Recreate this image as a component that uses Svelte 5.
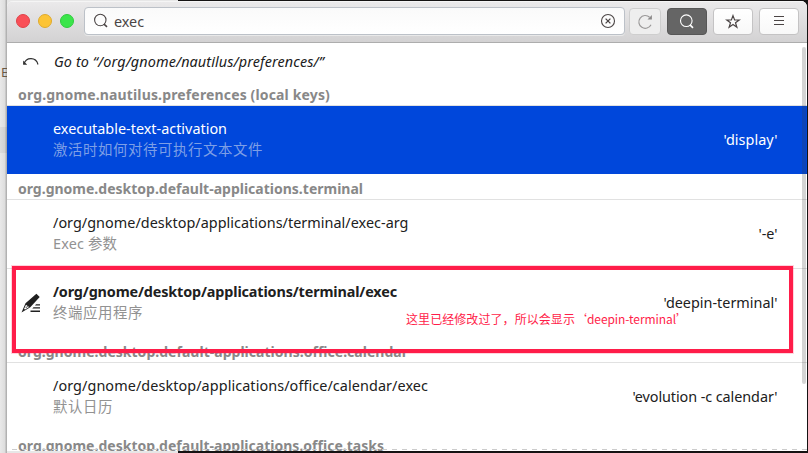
<script>
  const sections = [
    { title: 'org.gnome.nautilus.preferences (local keys)', width: 312, rows: [
      { name: 'executable-text-activation', nw: 174, desc: '激活时如何对待可执行文本文件', dw: 210, value: "'display'", vw: 54, selected: true }
    ] },
    { title: 'org.gnome.desktop.default-applications.terminal', width: 345, rows: [
      { name: '/org/gnome/desktop/applications/terminal/exec-arg', nw: 355.5, desc: 'Exec 参数', dw: 64, value: "'-e'", vw: 19 },
      { name: '/org/gnome/desktop/applications/terminal/exec', nw: 344, desc: '终端应用程序', dw: 90, value: "'deepin-terminal'", vw: 114, edited: true }
    ] },
    { title: 'org.gnome.desktop.default-applications.office.calendar', width: 390, rows: [
      { name: '/org/gnome/desktop/applications/office/calendar/exec', nw: 375, desc: '默认日历', dw: 60, value: "'evolution -c calendar'", vw: 145 }
    ] },
    { title: 'org.gnome.desktop.default-applications.office.tasks', width: 366, rows: [] }
  ];

  // Tracks a label so that it spans the given width.
  function fit(node, width) {
    const natural = node.getBoundingClientRect().width;
    const count = [...node.textContent].length;
    node.style.letterSpacing = `${(width - natural) / count}px`;
  }
</script>

<div class="desktop">
  <div class="behind"><span class="sliver">E</span><span class="band"></span></div>
  <div class="window">
    <header>
      <div class="lights"><i class="close"></i><i class="min"></i><i class="max"></i></div>
      <div class="search">
        <svg width="16" height="16" viewBox="0 0 16 16" fill="none" stroke="#4b4545" stroke-width="1.1"><circle cx="7.3" cy="7" r="5.7" /><path d="M11 11.2l3 2.7" stroke-width="1.6" /></svg>
        <span class="query" use:fit={30}>exec</span>
        <svg class="clear" width="16" height="16" viewBox="0 0 16 16" fill="none" stroke="#4b4545" stroke-width="1.1"><circle cx="8" cy="8" r="6.5" /><path d="M5.6 5.6l4.8 4.8M10.4 5.6l-4.8 4.8" stroke-width="1.3" /></svg>
      </div>
      <button class="reload" aria-label="Reload"><svg width="16" height="16" viewBox="0 0 16 16" fill="none" stroke="#9b9999" stroke-width="1.2"><path d="M12.6 3.2A6.4 6.4 0 1 0 14 10.7" /><path d="M14.9 1v4.4h-4.4z" fill="#8b8989" stroke="none" /></svg></button>
      <button class="active" aria-label="Search"><svg width="16" height="16" viewBox="0 0 16 16" fill="none" stroke="#fff" stroke-width="1.1"><circle cx="7.3" cy="6.7" r="5.8" /><path d="M11 10.9l3 2.9" stroke-width="1.6" /></svg></button>
      <button aria-label="Bookmarks"><svg width="16" height="16" viewBox="0 0 16 16" fill="none" stroke="#4b4545" stroke-width="1.2"><path d="M8 1.6l1.6 4.4h4.6l-3.7 2.7 1.4 4.5L8 10.5l-3.9 2.7 1.4-4.5L1.8 6h4.6z" /></svg></button>
      <button aria-label="Menu"><svg class="bars" width="16" height="16" viewBox="0 0 16 16" stroke="#4b4545"><path d="M3 3.5h10M3 7.5h10M3 11.5h10" /></svg></button>
    </header>
    <main>
      <div class="goto">
        <svg width="18" height="12" viewBox="0 0 18 12" fill="none" stroke="#303030" stroke-width="1.1"><path d="M2 7.8C4 1 14 .5 16 8.5" /><path d="M1.1 4.6v4.2h4.1z" fill="#303030" stroke="none" /></svg>
        <em use:fit={270}>Go to “/org/gnome/nautilus/preferences/”</em>
      </div>
      {#each sections as section}
        <h2><span use:fit={section.width}>{section.title}</span></h2>
        {#each section.rows as row}
          <div class="row" class:selected={row.selected} class:edited={row.edited}>
            <div class="mark">
              {#if row.edited}
                <svg width="20" height="20" viewBox="0 0 20 20" fill="#202020"><path d="M15.4.8l3.3 3.3L9.3 14.2.5 19.5l4-9.2zM15 11.3h4v1.2h-5zM12.5 14.2H19v1.3h-7.7zM9.5 17.6H19V19H9.5z" /><path d="M5 11.7l3.1 2.4-4 2.5-1.1-.7z" fill="#fff" /><path d="M4.7 15l2.3-2.3" stroke="#202020" stroke-width=".8" /></svg>
              {/if}
            </div>
            <div class="labels"><span class="name" use:fit={row.nw}>{row.name}</span><span class="desc" use:fit={row.dw}>{row.desc}</span></div>
            <span class="value" use:fit={row.vw}>{row.value}</span>
          </div>
        {/each}
      {/each}
    </main>
    <div class="more"></div>
    <div class="scroll"></div>
  </div>
  <div class="frame"></div>
  <div class="note"><span use:fit={169}>这里已经修改过了，所以会显示</span><span class="quoted" use:fit={113}>‘deepin-terminal’</span></div>
</div>

<style>
  .desktop { position: relative; width: 808px; height: 453px; box-sizing: border-box; padding: 1px 1px 2px 7px; overflow: hidden; background: linear-gradient(90deg, #e7e7e7 0 178px, #151313 178px); font: 14.4px/20px "Noto Sans", "Noto Sans CJK SC", sans-serif; color: #202020; }
  .behind { position: absolute; left: 0; top: 0; width: 7px; height: 453px; overflow: hidden; background: linear-gradient(90deg, #e9e9e9, #dedede 65%, #a6a6a6); }
  .sliver { position: absolute; left: 1px; top: 62px; font-size: 13px; white-space: nowrap; color: #6a5a46; }
  .band { position: absolute; left: 0; top: 127px; width: 7px; height: 26px; background: #0000000d; }
  .window { position: relative; height: 450px; overflow: hidden; background: #fff; border-radius: 6px 6px 0 0; }
  header { display: flex; height: 42px; box-sizing: border-box; border-bottom: 1px solid #adadad; padding: 6px 8px 0 9px; background: linear-gradient(#ebeaeb, #d3d2d3); box-shadow: inset 0 1px #f5f5f5; }
  .lights { display: flex; gap: 8px; padding-top: 7px; width: 68px; }
  .lights i { width: 14px; height: 14px; border-radius: 50%; box-sizing: border-box; }
  .close { background: #f94f57; border: 1px solid #df4249; }
  .min { background: #fcc436; border: 1px solid #dfaa2d; }
  .max { background: #3be54b; border: 1px solid #2fcc3d; }
  .search { display: flex; align-items: center; width: 541px; height: 28px; box-sizing: border-box; border: 1px solid #bcc1c8; border-radius: 4px; padding: 0 8px; background: linear-gradient(#fafafa, #fff); box-shadow: 0 1px #e9e9e9; color: #4b4545; }
  .query { margin: 2px 0 0 5px; }
  .clear { margin-left: auto; }
  button { display: flex; align-items: center; justify-content: center; width: 40px; height: 27px; box-sizing: border-box; margin: 1px 0 0 6px; padding: 0; border: 1px solid #c4c3c4; border-radius: 4px; background: linear-gradient(#fff, #f8f8f8); }
  .reload { width: 32px; margin-left: 4px; border-color: #cecece; background: #eeeeee; }
  .active { border-color: #575757; background: #656565; }
  .bars { margin-bottom: 1px; }
  .goto { display: flex; align-items: center; height: 38px; padding-left: 15px; }
  .goto em { margin-left: 14px; }
  span, em { white-space: nowrap; }
  h2 { height: 26px; margin: 0; box-sizing: border-box; border-bottom: 1px solid #e1e1e1; padding: 5px 0 0 11px; font: 700 14px/20px "Noto Sans", sans-serif; color: #888; }
  .goto + h2 { height: 25px; padding-top: 4px; }
  .row { display: flex; align-items: center; height: 68px; }
  .row + .row { border-top: 1px solid #e1e1e1; }
  .mark { width: 46px; box-sizing: border-box; padding: 0 0 1px 14px; }
  .mark svg { display: block; }
  .labels { display: flex; flex-direction: column; align-items: flex-start; padding-bottom: 2px; }
  .desc { height: 21px; line-height: 21px; font-family: "Noto Sans", "Noto Sans CJK SC", sans-serif; font-weight: 400; color: #929292; }
  .name { height: 21px; line-height: 21px; }
  .edited .name { font-weight: 700; }
  .value { margin-left: auto; margin-right: 29.5px; }
  .selected { background: #0047db; color: #fff; }
  .selected .desc { color: #7d9fe6; }
  .more { position: absolute; left: 5px; right: 0; bottom: 1px; height: 1px; background: repeating-linear-gradient(90deg, #ccc 0 5px, transparent 5px 10px); }
  .scroll { position: absolute; right: 1px; top: 46px; width: 4px; height: 337px; border-radius: 2px; background: #3c3c3c38; }
  .frame { position: absolute; left: 12px; top: 266px; width: 781px; height: 87px; box-sizing: border-box; border: 4px solid #ff1d49; box-shadow: 0 0 0 1px #ff1d4930; }
  .note { position: absolute; left: 406px; top: 310px; display: flex; font: 12px/18px "Noto Sans CJK SC", sans-serif; color: #ff1d49; }
  .quoted { font-size: 12px; }
</style>
